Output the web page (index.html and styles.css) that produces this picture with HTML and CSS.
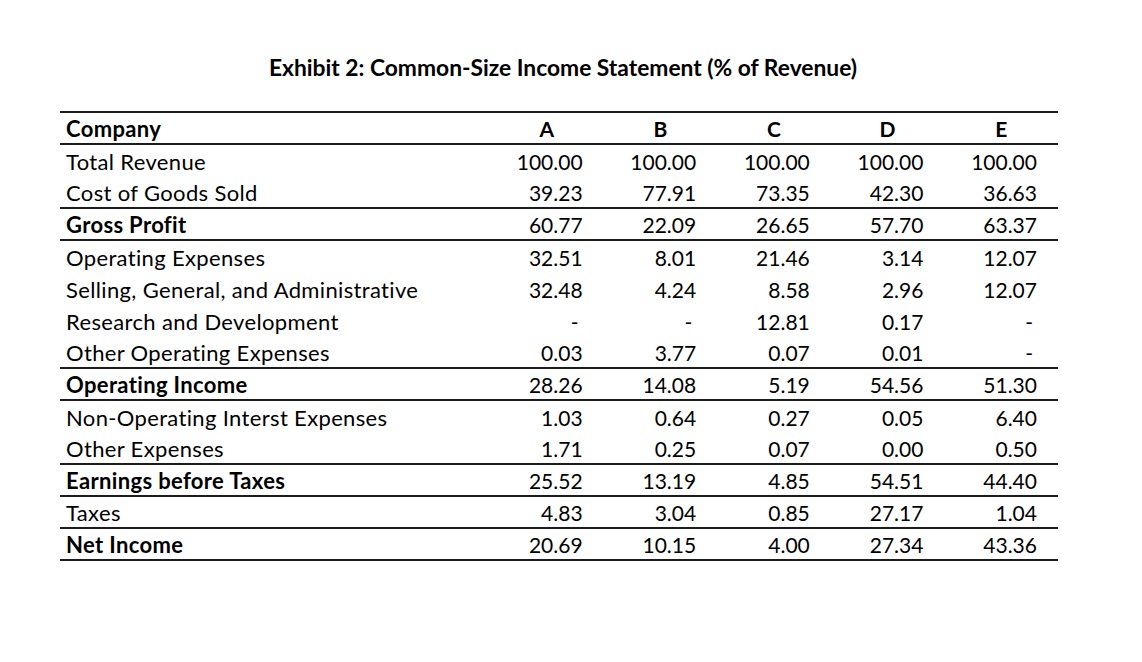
FILE: index.html
```html
<!DOCTYPE html>
<html lang="en">
<head>
<meta charset="utf-8">
<title>Exhibit 2</title>
<link rel="stylesheet" href="styles.css">
</head>
<body>
<div class="page">
  <h1 class="title">Exhibit 2: Common-Size Income Statement (% of Revenue)</h1>
  <div class="table">
    <div class="row head rule-bottom">
      <div class="label">Company</div>
      <div class="col">A</div><div class="col">B</div><div class="col">C</div><div class="col">D</div><div class="col">E</div>
    </div>
    <div class="row">
      <div class="label">Total Revenue</div>
      <div class="num">100.00</div><div class="num">100.00</div><div class="num">100.00</div><div class="num">100.00</div><div class="num">100.00</div>
    </div>
    <div class="row rule-bottom">
      <div class="label">Cost of Goods Sold</div>
      <div class="num">39.23</div><div class="num">77.91</div><div class="num">73.35</div><div class="num">42.30</div><div class="num">36.63</div>
    </div>
    <div class="row total rule-bottom">
      <div class="label">Gross Profit</div>
      <div class="num">60.77</div><div class="num">22.09</div><div class="num">26.65</div><div class="num">57.70</div><div class="num">63.37</div>
    </div>
    <div class="row">
      <div class="label">Operating Expenses</div>
      <div class="num">32.51</div><div class="num">8.01</div><div class="num">21.46</div><div class="num">3.14</div><div class="num">12.07</div>
    </div>
    <div class="row">
      <div class="label">Selling, General, and Administrative</div>
      <div class="num">32.48</div><div class="num">4.24</div><div class="num">8.58</div><div class="num">2.96</div><div class="num">12.07</div>
    </div>
    <div class="row">
      <div class="label">Research and Development</div>
      <div class="num dash">-</div><div class="num dash">-</div><div class="num">12.81</div><div class="num">0.17</div><div class="num dash">-</div>
    </div>
    <div class="row rule-bottom">
      <div class="label">Other Operating Expenses</div>
      <div class="num">0.03</div><div class="num">3.77</div><div class="num">0.07</div><div class="num">0.01</div><div class="num dash">-</div>
    </div>
    <div class="row total rule-bottom">
      <div class="label">Operating Income</div>
      <div class="num">28.26</div><div class="num">14.08</div><div class="num">5.19</div><div class="num">54.56</div><div class="num">51.30</div>
    </div>
    <div class="row">
      <div class="label">Non-Operating Interst Expenses</div>
      <div class="num">1.03</div><div class="num">0.64</div><div class="num">0.27</div><div class="num">0.05</div><div class="num">6.40</div>
    </div>
    <div class="row rule-bottom">
      <div class="label">Other Expenses</div>
      <div class="num">1.71</div><div class="num">0.25</div><div class="num">0.07</div><div class="num">0.00</div><div class="num">0.50</div>
    </div>
    <div class="row total rule-bottom">
      <div class="label">Earnings before Taxes</div>
      <div class="num">25.52</div><div class="num">13.19</div><div class="num">4.85</div><div class="num">54.51</div><div class="num">44.40</div>
    </div>
    <div class="row rule-bottom">
      <div class="label">Taxes</div>
      <div class="num">4.83</div><div class="num">3.04</div><div class="num">0.85</div><div class="num">27.17</div><div class="num">1.04</div>
    </div>
    <div class="row total rule-bottom">
      <div class="label">Net Income</div>
      <div class="num">20.69</div><div class="num">10.15</div><div class="num">4.00</div><div class="num">27.34</div><div class="num">43.36</div>
    </div>
  </div>
</div>
</body>
</html>
```

FILE: styles.css
```css
html, body {
  margin: 0;
  padding: 0;
  background: #ffffff;
}

body {
  font-family: Lato, "Liberation Sans", sans-serif;
  color: #000000;
  font-variant-ligatures: none;
}

.page {
  width: 998px;
  padding: 52px 0 0 60px;
}

.title {
  margin: 0;
  height: 30px;
  line-height: 30px;
  font-size: 22.8px;
  font-weight: 700;
  text-align: center;
  padding-left: 8px;
}

.table {
  margin-top: 29px;
  border-top: 2px solid #1c1c1c;
}

.row {
  display: grid;
  grid-template-columns: 430px repeat(5, 1fr);
  align-items: center;
  height: 32px;
  box-sizing: border-box;
  font-size: 21px;
}

.rule-bottom {
  border-bottom: 2px solid #1c1c1c;
}

.label {
  padding-left: 6px;
  white-space: nowrap;
  font-size: 22px;
  letter-spacing: 0.35px;
}

.head,
.total .label {
  font-weight: 700;
}

.col {
  text-align: center;
}

.num {
  text-align: right;
  padding-right: 21px;
}

.num.dash {
  padding-right: 25px;
}
```
